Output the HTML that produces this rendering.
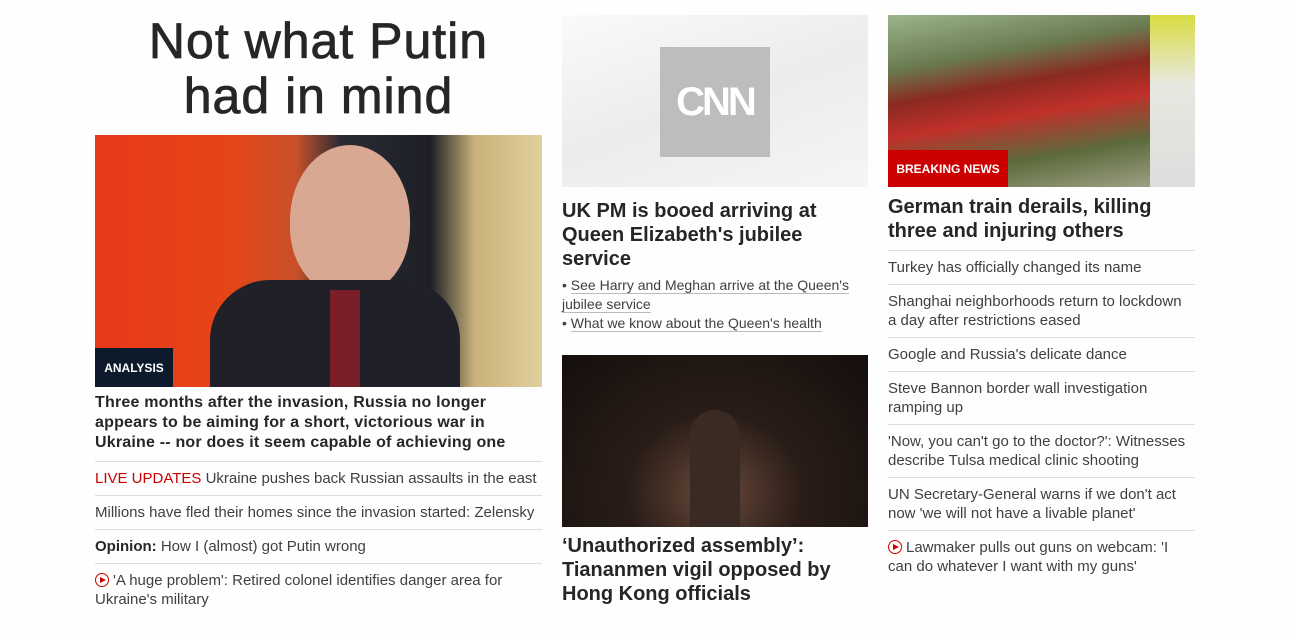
<!DOCTYPE html>
<html><head><meta charset="utf-8"><style>
*{margin:0;padding:0;box-sizing:border-box}
body{width:1290px;height:636px;background:#fefefe;font-family:"Liberation Sans",Arial,sans-serif;color:#262626;position:relative;overflow:hidden}
.a{position:absolute}
h1{position:absolute;left:75px;width:487px;top:14px;text-align:center;font-size:50px;font-weight:400;line-height:55px;color:#262626;letter-spacing:1px;-webkit-text-stroke:0.8px #262626}
.lbl{position:absolute;color:#fff;font-weight:bold;font-size:12px;display:flex;align-items:center;justify-content:center}
.hd{font-weight:bold;color:#262626}
.list{position:absolute;list-style:none}
.list li{border-top:1px solid #dcdcdc;font-size:15px;line-height:19px;padding:7px 0 7px;color:#404040}
.play{display:inline-block;width:14px;height:14px;border:1.5px solid #cc0000;border-radius:50%;position:relative;vertical-align:-2px;margin-right:4px}
.play:after{content:"";position:absolute;left:4px;top:2.5px;border-left:6px solid #cc0000;border-top:3.5px solid transparent;border-bottom:3.5px solid transparent}
.ul{border-bottom:1px solid #bbb}
</style></head><body>
<h1>Not what Putin<br>had in mind</h1>
<div class="a" style="left:95px;top:135px;width:447px;height:252px;background:linear-gradient(90deg,#e8381a 0%,#e64518 30%,#c8502a 45%,#2a2b33 55%,#1e1f26 75%,#c9b27a 85%,#e0cf9e 100%)"></div>
<div class="a" style="left:290px;top:145px;width:120px;height:150px;border-radius:50% 50% 45% 45%;background:#d9a892"></div>
<div class="a" style="left:210px;top:280px;width:250px;height:107px;border-radius:60px 60px 0 0;background:#1f2028"></div>
<div class="a" style="left:330px;top:290px;width:30px;height:97px;background:#7a1e2a"></div>
<div class="lbl" style="left:95px;top:348px;width:78px;height:39px;background:#0c1a2b">ANALYSIS</div>
<div class="a hd" style="left:95px;top:393px;width:430px;font-size:16px;line-height:20px;letter-spacing:0.2px">Three months after the invasion, Russia no longer appears to be aiming for a short, victorious war in Ukraine -- nor does it seem capable of achieving one</div>
<ul class="list" style="left:95px;top:461px;width:447px">
<li><span style="color:#cc0000">LIVE UPDATES</span> Ukraine pushes back Russian assaults in the east</li>
<li>Millions have fled their homes since the invasion started: Zelensky</li>
<li><b style="color:#262626">Opinion:</b> How I (almost) got Putin wrong</li>
<li style="line-height:19px;padding-right:30px"><span class="play"></span>'A huge problem': Retired colonel identifies danger area for Ukraine's military</li>
</ul>

<div class="a" style="left:562px;top:15px;width:306px;height:172px;background:linear-gradient(160deg,#fafafa,#ececec 50%,#f5f5f5)"></div>
<div class="a" style="left:660px;top:47px;width:110px;height:110px;background:#bdbdbd;color:#fff;font-size:40px;font-weight:bold;display:flex;align-items:center;justify-content:center;letter-spacing:-3px">CNN</div>
<div class="a hd" style="left:562px;top:199px;width:306px;font-size:20px;line-height:24px">UK PM is booed arriving at Queen Elizabeth's jubilee service</div>
<div class="a" style="left:562px;top:276px;width:306px;font-size:14px;line-height:19px;color:#404040">• <span class="ul">See Harry and Meghan arrive at the Queen's jubilee service</span><br>• <span class="ul">What we know about the Queen's health</span></div>
<div class="a" style="left:562px;top:355px;width:306px;height:172px;background:radial-gradient(ellipse at 50% 80%,#6a4a3a 0%,#2a1d18 40%,#140e0c 100%)"></div>
<div class="a" style="left:690px;top:410px;width:50px;height:117px;border-radius:25px 25px 0 0;background:#3a2a24"></div>
<div class="a hd" style="left:562px;top:534px;width:306px;font-size:20px;line-height:24px">‘Unauthorized assembly’: Tiananmen vigil opposed by Hong Kong officials</div>

<div class="a" style="left:888px;top:15px;width:307px;height:172px;background:linear-gradient(170deg,#9bb58a 0%,#6a7a50 25%,#8a2a20 40%,#c0302a 55%,#5c6b3c 75%,#a8a890 100%)"></div>
<div class="a" style="left:1150px;top:15px;width:45px;height:172px;background:linear-gradient(#d8dc40,#e8e8e0 40%,#ddd)"></div>
<div class="lbl" style="left:888px;top:150px;width:120px;height:37px;background:#cc0000">BREAKING NEWS</div>
<div class="a hd" style="left:888px;top:195px;width:307px;font-size:20px;line-height:24px">German train derails, killing three and injuring others</div>
<ul class="list" style="left:888px;top:250px;width:307px">
<li>Turkey has officially changed its name</li>
<li style="padding-right:10px">Shanghai neighborhoods return to lockdown a day after restrictions eased</li>
<li>Google and Russia's delicate dance</li>
<li>Steve Bannon border wall investigation ramping up</li>
<li>'Now, you can't go to the doctor?': Witnesses describe Tulsa medical clinic shooting</li>
<li>UN Secretary-General warns if we don't act now 'we will not have a livable planet'</li>
<li><span class="play"></span>Lawmaker pulls out guns on webcam: 'I can do whatever I want with my guns'</li>
</ul>
</body></html>
